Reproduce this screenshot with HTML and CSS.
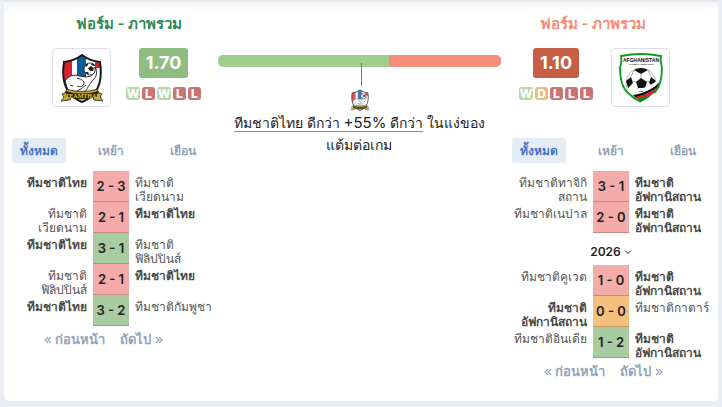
FILE: index.html
```html
<!DOCTYPE html>
<html lang="th">
<head>
    <meta charset="UTF-8">
    <meta name="viewport" content="width=device-width, initial-scale=1.0">
    <title>ฟอร์ม - ภาพรวม</title>
    <link rel="stylesheet" href="styles.css">
</head>
<body>
    <svg class="defs" width="0" height="0" aria-hidden="true">
        <clipPath id="thai-shield"><path d="M21 2 Q13 8 3 9 Q0 29 8 39 Q13 46 21 49 Q29 46 34 39 Q42 29 39 9 Q29 8 21 2Z"/></clipPath>
        <symbol id="crest-thai" viewBox="0 0 42 50">
            <g clip-path="url(#thai-shield)">
                <rect width="42" height="50" fill="#fff"/>
                <path fill="#d9222c" d="M2 6h9v23H2z"/>
                <path fill="#0a5a9c" d="M16 0h9v24h-9z"/>
                <path fill="#d9222c" d="M34 7h6v8h-6z"/>
                <circle cx="29" cy="16" r="6" fill="#fff" stroke="#222" stroke-width=".8"/>
                <path fill="#222" d="M27 15l3-2 3 2-1 3h-3zM24 12l3-2v2l-2 2zM31 10l3 2-1 1-3-1zM24 19l3 0 1 2-2 0z"/>
                <path fill="#fff" stroke="#222" stroke-width=".9" d="M4 28Q9 20 19 23Q25 25 30 23Q35 20 34 14Q38 22 32 27Q29 31 27 34Q25 40 18 40L7 38Z"/>
                <path fill="none" stroke="#333" stroke-width="1" d="M16 25Q24 27 23 31Q21 35 16 33M9 32l3 1M14 39Q21 36 25 32"/>
            </g>
            <path fill="none" stroke="#17181c" stroke-width="2" d="M21 2 Q13 8 3 9 Q0 29 8 39 Q13 46 21 49 Q29 46 34 39 Q42 29 39 9 Q29 8 21 2Z"/>
            <path fill="#c4a52a" stroke="#2a2410" stroke-width=".8" d="M0 48l3-4-2-3 5-2-1-3Q21 41 37 36l-1 3 5 2-2 3 3 4-9-1-1-3Q21 48 10 44l-1 3z"/>
            <path fill="#29230f" d="M4 38Q21 43 38 38l-2 6Q21 48 6 44z"/>
        </symbol>
        <symbol id="angles-left" viewBox="0 0 8 8">
            <path d="M4 1L1 4l3 3M7 1L4 4l3 3" fill="none" stroke="currentColor" stroke-width="1.2"/>
        </symbol>
        <symbol id="angles-right" viewBox="0 0 8 8">
            <path d="M1 1l3 3-3 3M4 1l3 3-3 3" fill="none" stroke="currentColor" stroke-width="1.2"/>
        </symbol>
    </svg>

    <main class="card">
        <section class="team home">
            <div class="summary">
                <h2 class="title">ฟอร์ม - ภาพรวม</h2>
                <div class="summary-row">
                    <a class="logo" href="#" aria-label="ทีมชาติไทย">
                        <svg class="crest" viewBox="0 0 42 50">
                            <use href="#crest-thai" width="42" height="50"/>
                            <text x="21" y="45" text-anchor="middle" class="crest-thai-text">TEAMTHAI</text>
                        </svg>
                    </a>
                    <div class="rating">
                        <div class="points good">1.70</div>
                        <div class="form">
                            <span class="badge w">W</span><span class="badge l">L</span><span class="badge w">W</span><span class="badge l">L</span><span class="badge l">L</span>
                        </div>
                    </div>
                </div>
            </div>
            <div class="tabs">
                <button class="tab active">ทั้งหมด</button>
                <button class="tab">เหย้า</button>
                <button class="tab">เยือน</button>
            </div>
            <table class="matches">
                <tr><td class="name own"><div>ทีมชาติไทย</div></td><td class="score loss">2 - 3</td><td class="name"><div>ทีมชาติ<br>เวียดนาม</div></td></tr>
                <tr><td class="name"><div>ทีมชาติ<br>เวียดนาม</div></td><td class="score loss">2 - 1</td><td class="name own"><div>ทีมชาติไทย</div></td></tr>
                <tr><td class="name own"><div>ทีมชาติไทย</div></td><td class="score win">3 - 1</td><td class="name"><div>ทีมชาติ<br>ฟิลิปปินส์</div></td></tr>
                <tr><td class="name"><div>ทีมชาติ<br>ฟิลิปปินส์</div></td><td class="score loss">2 - 1</td><td class="name own"><div>ทีมชาติไทย</div></td></tr>
                <tr><td class="name own"><div>ทีมชาติไทย</div></td><td class="score win">3 - 2</td><td class="name"><div>ทีมชาติกัมพูชา</div></td></tr>
            </table>
            <nav class="pager">
                <a href="#"><svg class="angles"><use href="#angles-left"/></svg> ก่อนหน้า</a>
                <a href="#">ถัดไป <svg class="angles"><use href="#angles-right"/></svg></a>
            </nav>
        </section>

        <section class="compare">
            <div class="bar">
                <div class="bar-home"></div>
                <div class="bar-away"></div>
            </div>
            <div class="pointer"></div>
            <svg class="mini-crest"><use href="#crest-thai"/></svg>
            <p class="verdict"><span class="better">ทีมชาติไทย ดีกว่า <span class="percent">+55%</span> ดีกว่า</span> ในแง่ของ<br>แต้มต่อเกม</p>
        </section>

        <section class="team away">
            <div class="summary">
                <h2 class="title">ฟอร์ม - ภาพรวม</h2>
                <div class="summary-row">
                    <div class="rating">
                        <div class="points bad">1.10</div>
                        <div class="form">
                            <span class="badge w">W</span><span class="badge d">D</span><span class="badge l">L</span><span class="badge l">L</span><span class="badge l">L</span>
                        </div>
                    </div>
                    <a class="logo" href="#" aria-label="ทีมชาติอัฟกานิสถาน">
                        <svg class="crest" viewBox="0 0 44 50">
                            <clipPath id="afghan-shield"><path d="M2 3 Q22-1 42 3 Q41 9 43 14 Q43 33 35 40 Q29 46 22 49 Q15 46 9 40 Q1 33 1 14 Q3 9 2 3Z"/></clipPath>
                            <g clip-path="url(#afghan-shield)">
                                <rect width="44" height="50" fill="#fff"/>
                                <circle cx="22" cy="30" r="15" fill="#fff" stroke="#777" stroke-width=".5"/>
                                <path fill="#111" d="M17 29l5-4 6 4-2 6h-7zM15 17q7-4 14 0l-7 4zM7 28l5-4 2 6-5 5zM37 28l-5-4-2 6 5 5z"/>
                                <path fill="none" stroke="#777" stroke-width=".6" d="M22 25v-4M17 29l-4-1M28 29l3-1M19 35l-3 4M26 35l3 3M15 17l-3 7M29 17l3 7"/>
                                <path fill="#fff" d="M8 37Q28 38 42 24V50H14z"/>
                                <path fill="#111" d="M44 24Q36 38 14 42l3 3Q38 38 44 29z"/>
                                <path fill="#d8232a" d="M44 28Q36 40 16 44l4 3Q39 40 44 32z"/>
                                <path fill="#078a1c" d="M44 32Q36 43 19 46l3 4h22z"/>
                            </g>
                            <path fill="none" stroke="#0c9a20" stroke-width="1.8" d="M35 40Q43 33 43 14Q41 9 42 3Q22-1 2 3Q3 9 1 14Q1 33 9 40Q14 45 22 49"/>
                            <text x="22" y="9" text-anchor="middle" class="crest-afghan-text">AFGHANISTAN</text>
                            <text x="22" y="12" text-anchor="middle" class="crest-afghan-sub">FOOTBALL FEDERATION</text>
                            <text x="22" y="39" text-anchor="middle" class="crest-afghan-sub">1922</text>
                        </svg>
                    </a>
                </div>
            </div>
            <div class="tabs">
                <button class="tab active">ทั้งหมด</button>
                <button class="tab">เหย้า</button>
                <button class="tab">เยือน</button>
            </div>
            <table class="matches">
                <tr><td class="name"><div>ทีมชาติทาจิกิ<br>สถาน</div></td><td class="score loss">3 - 1</td><td class="name own"><div>ทีมชาติ<br>อัฟกานิสถาน</div></td></tr>
                <tr><td class="name"><div>ทีมชาติเนปาล</div></td><td class="score loss">2 - 0</td><td class="name own"><div>ทีมชาติ<br>อัฟกานิสถาน</div></td></tr>
            </table>
            <button class="year">2026 <svg class="chevron" viewBox="0 0 8 8"><path d="M1 2.5l3 3 3-3" fill="none" stroke="currentColor"/></svg></button>
            <table class="matches">
                <tr><td class="name"><div>ทีมชาติคูเวต</div></td><td class="score loss">1 - 0</td><td class="name own"><div>ทีมชาติ<br>อัฟกานิสถาน</div></td></tr>
                <tr><td class="name own"><div>ทีมชาติ<br>อัฟกานิสถาน</div></td><td class="score draw">0 - 0</td><td class="name"><div>ทีมชาติกาตาร์</div></td></tr>
                <tr><td class="name"><div>ทีมชาติอินเดีย</div></td><td class="score win">1 - 2</td><td class="name own"><div>ทีมชาติ<br>อัฟกานิสถาน</div></td></tr>
            </table>
            <nav class="pager">
                <a href="#"><svg class="angles"><use href="#angles-left"/></svg> ก่อนหน้า</a>
                <a href="#">ถัดไป <svg class="angles"><use href="#angles-right"/></svg></a>
            </nav>
        </section>
    </main>
</body>
</html>
```
FILE: styles.css
```css
* {
    box-sizing: border-box;
}

body {
    margin: 0;
    padding: 0 4px 6px;
    background-color: #ebeff4;
    font-family: Inter, "Noto Sans", sans-serif;
    color: #222;
}

button {
    border: none;
    background: none;
    padding: 0;
    font-family: inherit;
    cursor: pointer;
}

a {
    color: inherit;
    text-decoration: none;
}

.defs {
    position: absolute;
}

.card {
    display: grid;
    grid-template-columns: 198px 1fr 198px;
    padding: 2px 8px 18px;
    background: linear-gradient(#e3e6ea 2px, #f5f6f8 2px, #fff 14px);
    border-radius: 0 0 5px 5px;
}

/* team summary */
.summary {
    width: 154px;
}

.home .summary {
    margin-left: 40px;
}

.away .summary {
    margin-left: 4px;
}

.title {
    margin: 11px 0 13px;
    font-size: 15px;
    line-height: 22px;
    font-weight: 600;
    text-align: center;
    white-space: nowrap;
    color: #2e8b57;
}

.away .title {
    color: #f68d78;
}

.summary-row {
    display: flex;
    gap: 15px;
}

.away .summary-row {
    justify-content: flex-end;
    gap: 18px;
}

.logo {
    display: flex;
    align-items: center;
    justify-content: center;
    width: 59px;
    height: 59px;
    border: 1px solid #dde0ea;
    border-radius: 4px;
}

.crest {
    width: 44px;
    height: 50px;
}

.crest-thai-text {
    font: bold 6px "Liberation Serif", serif;
    fill: #e8c82e;
}

.crest-afghan-text {
    font: bold 5px "Liberation Sans", sans-serif;
    fill: #111;
}

.crest-afghan-sub {
    font: bold 2px "Liberation Sans", sans-serif;
    fill: #111;
}

.rating {
    display: flex;
    flex-direction: column;
    align-items: center;
    gap: 9px;
}

.points {
    padding: 0 7px;
    border-radius: 3px;
    font-size: 18px;
    line-height: 30px;
    font-weight: 700;
    color: #fff;
}

.good {
    background-color: #8fbc80;
}

.bad {
    background-color: #c75e46;
}

.form {
    display: flex;
    gap: 2px;
}

.badge {
    min-width: 13px;
    border-radius: 3px;
    font-size: 12px;
    line-height: 13px;
    font-weight: 800;
    text-align: center;
    color: #fff;
}

.w {
    min-width: 14px;
    background-color: #b5d7a5;
}

.d {
    background-color: #e7bd7c;
}

.l {
    background-color: #c97474;
}

/* tabs */
.tabs {
    display: flex;
    justify-content: space-between;
    margin: 31px 0 8px;
}

.tab {
    width: 54px;
    border-radius: 3px;
    font-size: 12px;
    line-height: 25px;
    font-weight: 600;
    color: #94a3b8;
}

.active {
    background-color: #e4ecf6;
    color: #4472c4;
}

/* match list */
.matches {
    width: 100%;
    table-layout: fixed;
    border-collapse: separate;
    border-spacing: 0;
}

.matches td {
    height: 31px;
    padding: 0;
}

.matches .name {
    width: 81px;
    padding-top: 5px;
    padding-right: 6px;
    vertical-align: top;
    font-size: 12px;
    line-height: 14px;
    text-align: right;
    white-space: nowrap;
    color: #555;
}

/* two-line names must not stretch the row */
.name div {
    max-height: 26px;
}

.matches .score + .name {
    padding-right: 0;
    padding-left: 6px;
    text-align: left;
}

.matches .own {
    font-weight: 700;
    color: #4a4a4a;
}

.score {
    width: 35px;
    border-bottom: 1px solid rgba(0, 0, 0, 0.2);
    font-size: 13px;
    line-height: 14px;
    font-weight: 600;
    text-align: center;
    white-space: nowrap;
}

.loss {
    background-color: #f5aba9;
}

.win {
    background-color: #a8cb9f;
}

.draw {
    background-color: #f5c07e;
}

.year {
    display: block;
    width: 100%;
    padding: 9px 0 3px;
    font-size: 12px;
    line-height: 20px;
    font-weight: 600;
    color: #222;
}

.chevron {
    width: 8px;
    height: 8px;
}

.pager {
    display: flex;
    gap: 15px;
    padding: 1px 0 0 32px;
    font-size: 13px;
    line-height: 24px;
    font-weight: 600;
    white-space: nowrap;
    color: #94a3b8;
}

.angles {
    width: 8px;
    height: 8px;
}

/* comparison */
.compare {
    display: flex;
    flex-direction: column;
    align-items: center;
    min-width: 0;
    padding: 53px 11px 0 8px;
}

.bar {
    display: flex;
    width: 100%;
    height: 12px;
    border-radius: 5px;
    overflow: hidden;
}

.bar-home {
    flex: 60.5;
    background-color: #a1cd91;
}

.bar-away {
    flex: 39.5;
    background-color: #f68d78;
}

.pointer {
    width: 1px;
    height: 23px;
    margin-top: -4px;
    margin-left: 3px;
    background-color: #777;
}

.mini-crest {
    width: 20px;
    height: 22px;
    margin-top: 3px;
    opacity: 0.8;
}

.verdict {
    margin: 1px 0 0;
    font-size: 14px;
    line-height: 22px;
    text-align: center;
    white-space: nowrap;
}

.percent {
    font-size: 15px;
}

.better {
    border-bottom: 1px solid #5fb832;
}
```
